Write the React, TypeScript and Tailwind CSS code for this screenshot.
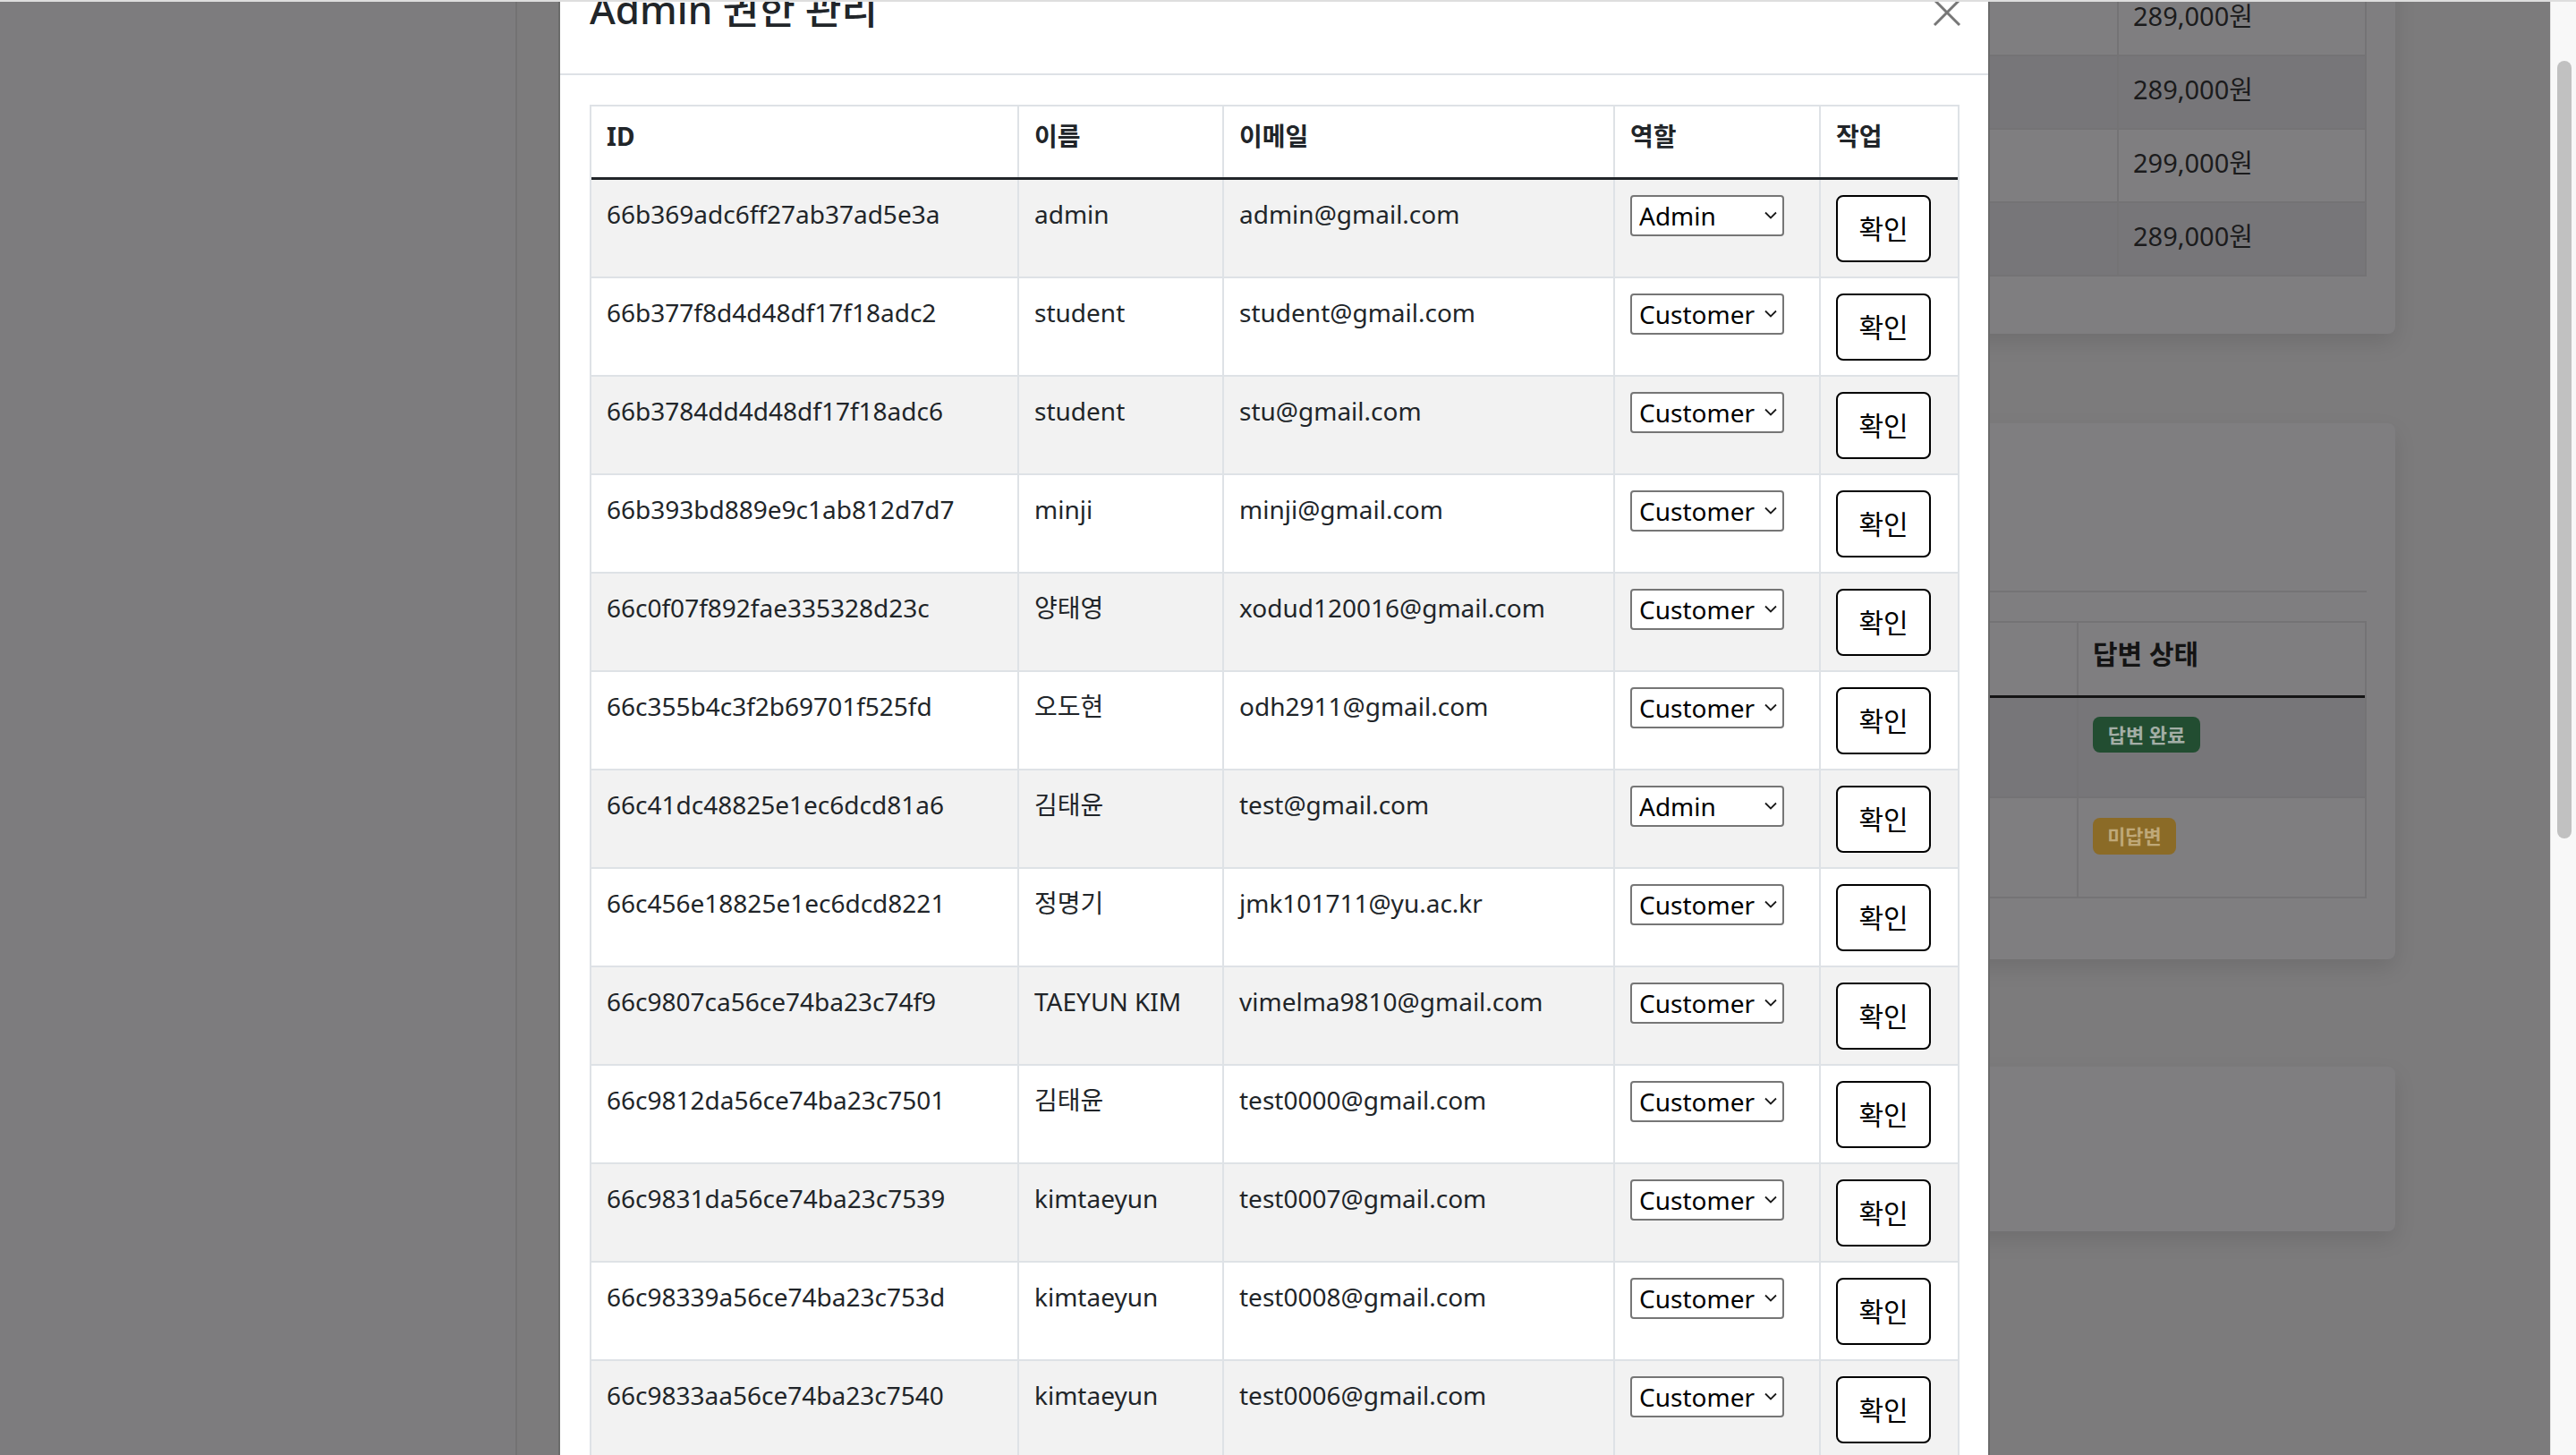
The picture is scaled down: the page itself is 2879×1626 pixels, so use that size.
import React from 'react';

type Role = 'Admin' | 'Customer';

interface User {
  id: string;
  name: string;
  email: string;
  role: Role;
}

const USERS: User[] = [
  { id: '66b369adc6ff27ab37ad5e3a', name: 'admin', email: 'admin@gmail.com', role: 'Admin' },
  { id: '66b377f8d4d48df17f18adc2', name: 'student', email: 'student@gmail.com', role: 'Customer' },
  { id: '66b3784dd4d48df17f18adc6', name: 'student', email: 'stu@gmail.com', role: 'Customer' },
  { id: '66b393bd889e9c1ab812d7d7', name: 'minji', email: 'minji@gmail.com', role: 'Customer' },
  { id: '66c0f07f892fae335328d23c', name: '양태영', email: 'xodud120016@gmail.com', role: 'Customer' },
  { id: '66c355b4c3f2b69701f525fd', name: '오도현', email: 'odh2911@gmail.com', role: 'Customer' },
  { id: '66c41dc48825e1ec6dcd81a6', name: '김태윤', email: 'test@gmail.com', role: 'Admin' },
  { id: '66c456e18825e1ec6dcd8221', name: '정명기', email: 'jmk101711@yu.ac.kr', role: 'Customer' },
  { id: '66c9807ca56ce74ba23c74f9', name: 'TAEYUN KIM', email: 'vimelma9810@gmail.com', role: 'Customer' },
  { id: '66c9812da56ce74ba23c7501', name: '김태윤', email: 'test0000@gmail.com', role: 'Customer' },
  { id: '66c9831da56ce74ba23c7539', name: 'kimtaeyun', email: 'test0007@gmail.com', role: 'Customer' },
  { id: '66c98339a56ce74ba23c753d', name: 'kimtaeyun', email: 'test0008@gmail.com', role: 'Customer' },
  { id: '66c9833aa56ce74ba23c7540', name: 'kimtaeyun', email: 'test0006@gmail.com', role: 'Customer' },
];

const PRICES = ['289,000원', '289,000원', '299,000원', '289,000원'];

const COLS = 'grid grid-cols-[478px_229px_437px_230px_153px]';

// dimmed page behind the modal backdrop
const Background: React.FC = () => (
  <div className="flex-1 flex bg-[#7c7b7c]">
    <aside className="w-[578px] bg-[#7d7c7e] border-r-2 border-[#737273]" />
    <main className="flex-1 flex flex-col items-end pr-[173px]">
      {/* product list card */}
      <div className="w-[1926px] h-[573px] -mt-[200px] rounded-[8px] bg-[#7f7e80] shadow-[0_10px_24px_rgba(0,0,0,0.10)] px-[32px] pb-[64px] flex flex-col justify-end">
        <div className="border-x-2 border-[#747375]">
          {PRICES.map((p, i) => (
            <div
              key={i}
              className={`grid grid-cols-[1fr_277px] h-[82px] border-b-2 border-[#747375] ${i % 2 === 1 ? 'bg-[#777679]' : ''}`}
            >
              <div />
              <div className="border-l-2 border-[#747375] pl-[16px] pt-[16px] text-[29px] leading-[42px] text-[#1b1b1c]">{p}</div>
            </div>
          ))}
        </div>
      </div>

      {/* inquiry card */}
      <div className="w-[1926px] h-[599px] mt-[100px] rounded-[8px] bg-[#7f7e80] shadow-[0_10px_24px_rgba(0,0,0,0.10)] px-[32px]">
        <div className="h-[189px] border-b-2 border-[#747375]" />
        <div className="mt-[32px] border-t-2 border-x-2 border-[#747375]">
          <div className="grid grid-cols-[1fr_322px] h-[84px] border-b-[3px] border-[#141414]">
            <div />
            <div className="border-l-2 border-[#747375] pl-[16px] pt-[14px] text-[30px] leading-[42px] font-bold text-[#141414]">답변 상태</div>
          </div>
          <div className="grid grid-cols-[1fr_322px] h-[112px] border-b-2 border-[#747375] bg-[#777679]">
            <div />
            <div className="border-l-2 border-[#747375] pl-[16px] pt-[21px]">
              <span className="inline-flex items-center justify-center w-[120px] h-[40px] rounded-[8px] bg-[#224d31] text-[22px] font-bold text-[#a3aea6]">답변 완료</span>
            </div>
          </div>
          <div className="grid grid-cols-[1fr_322px] h-[112px] border-b-2 border-[#747375]">
            <div />
            <div className="border-l-2 border-[#747375] pl-[16px] pt-[22px]">
              <span className="inline-flex items-center justify-center w-[93px] h-[41px] rounded-[8px] bg-[#8b6b27] text-[22px] font-bold text-[#bfa878]">미답변</span>
            </div>
          </div>
        </div>
      </div>

      <div className="w-[1926px] h-[184px] mt-[120px] rounded-[8px] bg-[#7f7e80] shadow-[0_10px_24px_rgba(0,0,0,0.10)]" />
    </main>
  </div>
);

const RoleSelect: React.FC<{ value: Role }> = ({ value }) => (
  <div className="relative w-[172px] h-[46px]">
    <select
      defaultValue={value}
      className="appearance-none w-full h-full bg-white border-2 border-[#767676] rounded-[4px] pl-[8px] pr-[26px] text-[28px] text-black outline-none"
    >
      <option value="Admin">Admin</option>
      <option value="Customer">Customer</option>
    </select>
    <svg className="absolute right-[8px] top-[18px] pointer-events-none" width="14" height="9" viewBox="0 0 14 9" fill="none">
      <path d="M1 1.5l6 6 6-6" stroke="#1a1a1a" strokeWidth="1.8" />
    </svg>
  </div>
);

const AdminModal: React.FC = () => (
  <div className="absolute top-0 left-[624px] w-[1600px] h-[1626px] bg-white border-x-2 border-[#6b6b6b] text-[#212529]">
    {/* Header */}
    <div className="flex justify-between items-start h-[84px] border-b-2 border-[#dee2e6] pl-[33px] pr-[30px]">
      <h5 className="-mt-[16px] text-[44px] leading-[53px] font-medium">Admin 권한 관리</h5>
      <button className="-mt-[2px] text-[#777]">
        <svg width="32" height="32" viewBox="0 0 32 32" fill="none">
          <path d="M2 2l28 28M30 2L2 30" stroke="currentColor" strokeWidth="3" />
        </svg>
      </button>
    </div>

    {/* Body */}
    <div className="pl-[33px] pt-[33px]">
      <div className="w-[1531px] border-t-2 border-x-2 border-[#dee2e6] text-[28px] leading-[42px]">
        <div className={`${COLS} h-[82px] border-b-[3px] border-[#212529] font-bold`}>
          {['ID', '이름', '이메일', '역할', '작업'].map((h, i) => (
            <div key={h} className={`px-[17px] pt-[12px] ${i < 4 ? 'border-r-2 border-[#dee2e6]' : ''}`}>{h}</div>
          ))}
        </div>
        {USERS.map((u, i) => (
          <div key={u.id} className={`${COLS} h-[110px] border-b-2 border-[#dee2e6] ${i % 2 === 0 ? 'bg-[#f2f2f2]' : 'bg-white'}`}>
            <div className="px-[17px] pt-[17px] border-r-2 border-[#dee2e6]">{u.id}</div>
            <div className="px-[17px] pt-[17px] border-r-2 border-[#dee2e6]">{u.name}</div>
            <div className="px-[17px] pt-[17px] border-r-2 border-[#dee2e6]">{u.email}</div>
            <div className="px-[17px] pt-[17px] border-r-2 border-[#dee2e6]">
              <RoleSelect value={u.role} />
            </div>
            <div className="px-[17px] pt-[17px]">
              <button className="w-[106px] h-[75px] bg-white border-2 border-black rounded-[8px] text-[30px] text-black">확인</button>
            </div>
          </div>
        ))}
      </div>
    </div>
  </div>
);

export default function App() {
  return (
    <div className="relative flex w-full h-[1626px] overflow-hidden font-['Noto_Sans','Noto_Sans_CJK_KR',sans-serif]">
      <Background />

      {/* browser scrollbar */}
      <div className="w-[29px] bg-[#f8f8f8] border-l border-[#e2e2e2] pt-[68px] pl-[7px]">
        <div className="w-[16px] h-[869px] rounded-full bg-[#c1c1c1]" />
      </div>

      <AdminModal />

      <div className="absolute inset-x-0 top-0 h-[2px] bg-[#dedede]" />
    </div>
  );
}
